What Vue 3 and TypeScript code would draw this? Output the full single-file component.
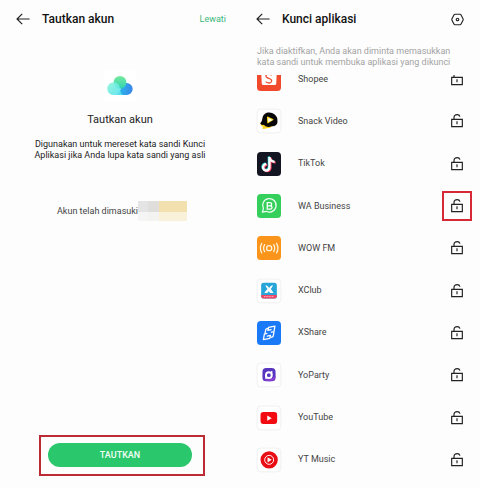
<script setup lang="ts">
import { ref } from 'vue'

interface AppEntry {
  id: string
  name: string
  marked?: boolean
}

const apps: AppEntry[] = [
  { id: 'shopee', name: 'Shopee' },
  { id: 'snack', name: 'Snack Video' },
  { id: 'tiktok', name: 'TikTok' },
  { id: 'wa', name: 'WA Business', marked: true },
  { id: 'wow', name: 'WOW FM' },
  { id: 'xclub', name: 'XClub' },
  { id: 'xshare', name: 'XShare' },
  { id: 'yoparty', name: 'YoParty' },
  { id: 'youtube', name: 'YouTube' },
  { id: 'ytmusic', name: 'YT Music' },
]

const locked = ref<Record<string, boolean>>({})

function toggle(id: string): void {
  locked.value[id] = !locked.value[id]
}
</script>

<template>
  <main class="screens">
    <section class="screen">
      <header class="bar">
        <button class="icon-button" type="button" aria-label="Kembali">
          <svg class="arrow" viewBox="0 0 14 12"><path d="M6.2 .8 1 6l5.2 5.2M1 6h12.6" /></svg>
        </button>
        <h1 class="title">Tautkan akun</h1>
        <a class="skip" href="#">Lewati</a>
      </header>

      <div class="intro">
        <svg class="cloud" viewBox="0 0 96 96" aria-hidden="true">
          <defs>
            <linearGradient id="cloudLeft" x1="0" y1="0" x2="1" y2="1">
              <stop offset="0" stop-color="#8ff5d8" /><stop offset="1" stop-color="#4fe0ee" />
            </linearGradient>
            <linearGradient id="cloudRight" x1="0" y1="0" x2="1" y2="0">
              <stop offset="0" stop-color="#25c9e8" /><stop offset="1" stop-color="#3a86ea" />
            </linearGradient>
            <linearGradient id="cloudTop" x1="0" y1="0" x2="0" y2="1">
              <stop offset="0" stop-color="#77ea9c" /><stop offset="1" stop-color="#2ed3b4" />
            </linearGradient>
          </defs>
          <rect width="96" height="96" rx="14" fill="#fff" />
          <path d="M30 75h38a18 18 0 1 0-18-18L40 75z" fill="url(#cloudRight)" />
          <circle cx="48" cy="37" r="19" fill="url(#cloudTop)" />
          <path d="M29 75a19 19 0 1 1 18-24c2 9 1 17 9 24z" fill="url(#cloudLeft)" opacity=".9" />
        </svg>
        <h2 class="heading">Tautkan akun</h2>
        <p class="lead">Digunakan untuk mereset kata sandi Kunci<br />Aplikasi jika Anda lupa kata sandi yang asli</p>
        <p class="account">
          <span>Akun telah dimasuki</span>
          <span class="mosaic" aria-hidden="true"><i></i><i></i><i></i><i></i><i></i><i></i></span>
        </p>
      </div>

      <div class="action-frame">
        <button class="primary" type="button">TAUTKAN</button>
      </div>
    </section>

    <section class="screen">
      <header class="bar">
        <button class="icon-button" type="button" aria-label="Kembali">
          <svg class="arrow" viewBox="0 0 14 12"><path d="M6.2 .8 1 6l5.2 5.2M1 6h12.6" /></svg>
        </button>
        <h1 class="title">Kunci aplikasi</h1>
        <button class="icon-button settings" type="button" aria-label="Pengaturan">
          <svg class="gear" viewBox="0 0 40 38">
            <path d="M12 3h16q2 0 3 2l6 12q1 2 0 4l-6 12q-1 2-3 2H12q-2 0-3-2L3 21q-1-2 0-4L9 5q1-2 3-2z" />
            <circle cx="20" cy="19" r="4" />
          </svg>
        </button>
      </header>

      <p class="hint">Jika diaktifkan, Anda akan diminta memasukkan<br />kata sandi untuk membuka aplikasi yang dikunci</p>

      <div class="scroller">
        <ul class="apps">
          <li v-for="app in apps" :key="app.id" class="row">
            <svg class="app-icon" viewBox="0 0 75 75" aria-hidden="true">
              <g v-if="app.id === 'shopee'">
                <rect width="75" height="75" rx="12" fill="#f1492c" />
                <path d="M13 16h49l-2 36q0 4-5 4H20q-5 0-5-4z" fill="#fff" />
                <path d="M46 26q-8-6-14-3-7 4-2 9 2 2 8 4 10 4 7 10-5 8-18 0" fill="none" stroke="#ee4d2d" stroke-width="4" />
              </g>
              <g v-else-if="app.id === 'snack'">
                <rect class="tile" x=".5" y=".5" width="74" height="74" rx="11" />
                <path d="M11 42q-1 10 8 14l-3 5q7 3 13-1 13 1 19-7L26 40z" fill="#f8d323" />
                <path d="M17 29C19 12 36 7 49 13q17 8 15 28c0 9-8 14-18 13-9 4-19 2-24-4q-10 0-12-5 6-5 7-16z" fill="#080808" />
                <path d="M31 26q0-4 4-2l15 7q4 2 0 4L36 44q-4 2-4-2z" fill="#fbd51f" />
                <path d="M35 27l13 7-13 7z" fill="#fff" />
              </g>
              <g v-else-if="app.id === 'tiktok'">
                <rect width="75" height="75" rx="12" fill="#141522" />
                <g fill="none" stroke-width="7">
                  <path d="M37 14v32a10 10 0 1 1-10-10M37 14q2 13 16 15" stroke="#35e6e4" />
                  <path d="M42 18v32a10 10 0 1 1-10-10M42 18q2 13 16 15" stroke="#f73b5d" />
                  <path d="M39 16v32a10 10 0 1 1-10-10M39 16q2 13 16 15" stroke="#fff" />
                </g>
              </g>
              <g v-else-if="app.id === 'wa'">
                <rect width="75" height="75" rx="12" fill="#35cf5b" />
                <path d="M17 57l3-12a21 21 0 1 1 9 9z" fill="none" stroke="#e9fff0" stroke-width="4" stroke-linejoin="round" />
                <path d="M32 27h8q6 0 6 5t-6 5h-8zm0 10h9q6 0 6 5t-6 5h-9z" fill="none" stroke="#fff" stroke-width="4" />
              </g>
              <g v-else-if="app.id === 'wow'">
                <rect width="75" height="75" rx="12" fill="#fb941a" />
                <g fill="none" stroke="#fff3d8" stroke-width="4" stroke-linecap="round">
                  <circle cx="38" cy="38" r="8" />
                  <path d="M24 27q-7 11 0 22M52 27q7 11 0 22M15 23q-9 15 0 30M61 23q9 15 0 30" />
                </g>
              </g>
              <g v-else-if="app.id === 'xclub'">
                <rect class="tile" x=".5" y=".5" width="74" height="74" rx="11" />
                <rect x="13" y="12" width="49" height="49" rx="8" fill="#27a5d8" />
                <path d="M13 50h49v4q0 7-8 7H21q-8 0-8-7z" fill="#ef4767" />
                <path d="M26 19q9 3 12 9 4-7 12-9-2 8-7 12 4 5 9 13H41l-4-6-5 6H23q4-8 10-13-5-4-7-12z" fill="#fff" />
                <path d="M22 55h31" stroke="#ffc1c9" stroke-width="3" stroke-dasharray="3 2" />
              </g>
              <g v-else-if="app.id === 'xshare'">
                <rect width="75" height="75" rx="12" fill="#1979f7" />
                <g fill="none" stroke="#fff" stroke-width="4" stroke-linejoin="round" stroke-linecap="round">
                  <path d="M33 27l-8 2-3 17 20-4 2-9-10 2" transform="translate(-2 12)" />
                  <path d="M45 47l8-2 3-17-20 4-2 9 10-2" transform="translate(0 -12)" />
                  <path d="M25 38l3-13 6-2M53 36l-3 13-6 2" />
                </g>
              </g>
              <g v-else-if="app.id === 'yoparty'">
                <rect class="tile" x=".5" y=".5" width="74" height="74" rx="11" />
                <rect x="17" y="16" width="41" height="41" rx="12" fill="#5936c0" />
                <path d="M20 51q8 8 25 5 13-1 13-17-8 14-38 12z" fill="#8d3fd2" />
                <circle cx="37" cy="38" r="9" fill="none" stroke="#fff" stroke-width="6" />
                <path d="M46 25v13M28 38v12" stroke="#fff" stroke-width="4" />
              </g>
              <g v-else-if="app.id === 'youtube'">
                <rect class="tile" x=".5" y=".5" width="74" height="74" rx="11" />
                <rect x="11" y="19" width="52" height="37" rx="9" fill="#f30b12" />
                <path d="M32 30l14 8-14 8z" fill="#fff" />
              </g>
              <g v-else>
                <rect class="tile" x=".5" y=".5" width="74" height="74" rx="11" />
                <circle cx="38" cy="37" r="27" fill="#e80e14" />
                <circle cx="38" cy="37" r="14" fill="none" stroke="#fff" stroke-width="3" />
                <path d="M33 29l13 8-13 8z" fill="#fff" />
              </g>
            </svg>
            <span class="name">{{ app.name }}</span>
            <button
              class="icon-button lock"
              :class="{ marked: app.marked }"
              type="button"
              :aria-label="'Kunci ' + app.name"
              :aria-pressed="!!locked[app.id]"
              @click="toggle(app.id)"
            >
              <svg class="padlock" viewBox="0 0 36 42">
                <path d="M2 16h32v22H2zM18 22v9" />
                <path v-if="locked[app.id]" d="M9 16v-5q0-9 9-9t9 9v5" />
                <path v-else d="M9 16v-5q0-9 10-9 6 0 8 6" />
              </svg>
            </button>
          </li>
        </ul>
      </div>
    </section>
  </main>
</template>

<style>
body {
  margin: 0;
  background: #fdfdfd;
}
</style>

<style scoped>
.screens {
  display: grid;
  grid-template-columns: 1fr 1fr;
  min-height: 100vh;
  font-family: Roboto, "Liberation Sans", sans-serif;
  font-size: 9px;
  line-height: 11px;
  color: #222;
}
.screen {
  display: flex;
  flex-direction: column;
  min-width: 0;
}
h1, h2, p, ul {
  margin: 0;
  padding: 0;
}
svg {
  display: block;
}
.bar {
  display: flex;
  align-items: center;
  box-sizing: border-box;
  height: 38px;
  padding: 0 14px 0 16px;
}
.icon-button {
  display: grid;
  place-items: center;
  padding: 0;
  border: 0;
  background: none;
  cursor: pointer;
}
.arrow {
  width: 14px;
  height: 12px;
  fill: none;
  stroke: #222;
  stroke-width: 1.2;
}
.title {
  flex: 1;
  margin-left: 12px;
  font-size: 12px;
  font-weight: 500;
  line-height: 16px;
  color: #111;
}
.skip {
  color: #3cb77b;
  text-decoration: none;
}
.settings {
  margin-right: 2px;
}
.gear {
  width: 13px;
  height: 13px;
  fill: none;
  stroke: #222;
  stroke-width: 3.5;
}
.intro {
  display: flex;
  flex: 1;
  flex-direction: column;
  align-items: center;
  padding-top: 32px;
  text-align: center;
}
.cloud {
  width: 32px;
  height: 32px;
}
.heading {
  margin-top: 10px;
  font-size: 11px;
  font-weight: 400;
  line-height: 16px;
}
.lead {
  margin-top: 11px;
}
.account {
  display: flex;
  align-items: center;
  margin-top: 40px;
  padding-left: 4px;
  color: #444;
}
.mosaic {
  display: grid;
  grid-template-columns: 10px 11px 28px;
  grid-template-rows: 11px 9px;
}
.mosaic i:nth-child(1) { background: #e4e4e4; }
.mosaic i:nth-child(2) { background: #dfdedb; }
.mosaic i:nth-child(3) { background: #f2e0ae; }
.mosaic i:nth-child(4) { background: #f5f5f5; }
.mosaic i:nth-child(5) { background: #f3f3f2; }
.mosaic i:nth-child(6) { background: #f9f1da; }
.action-frame {
  margin: 0 35px 12px 39px;
  padding: 6px 11px 7px 7px;
  border: 2px solid #bb2a35;
}
.primary {
  display: block;
  width: 100%;
  height: 24px;
  padding: 0;
  border: 0;
  border-radius: 12px;
  background: #2ac76d;
  color: #f3fff7;
  font-family: inherit;
  font-size: 9px;
  font-weight: 500;
}
.hint {
  margin: 8px 0 7px;
  padding-left: 17px;
  color: #a3a3a3;
  white-space: nowrap;
}
.scroller {
  display: flex;
  flex: 1;
  flex-direction: column;
  overflow: hidden;
}
.apps {
  display: grid;
  flex: 1;
  grid-auto-rows: 1fr;
  margin: -17px 0 7px;
  list-style: none;
}
.row {
  display: flex;
  align-items: center;
  padding: 0 8px 0 17px;
}
.app-icon {
  width: 24px;
  height: 24px;
  overflow: visible;
}
.tile {
  fill: #fff;
  stroke: #e8e8e8;
  stroke-width: 2;
}
.name {
  flex: 1;
  margin-left: 17px;
  color: #444;
}
.lock {
  box-sizing: border-box;
  width: 30px;
  height: 30px;
}
.marked {
  border: 2px solid #d62835;
}
.padlock {
  width: 12px;
  height: 14px;
  fill: none;
  stroke: #222;
  stroke-width: 3.5;
}
</style>
